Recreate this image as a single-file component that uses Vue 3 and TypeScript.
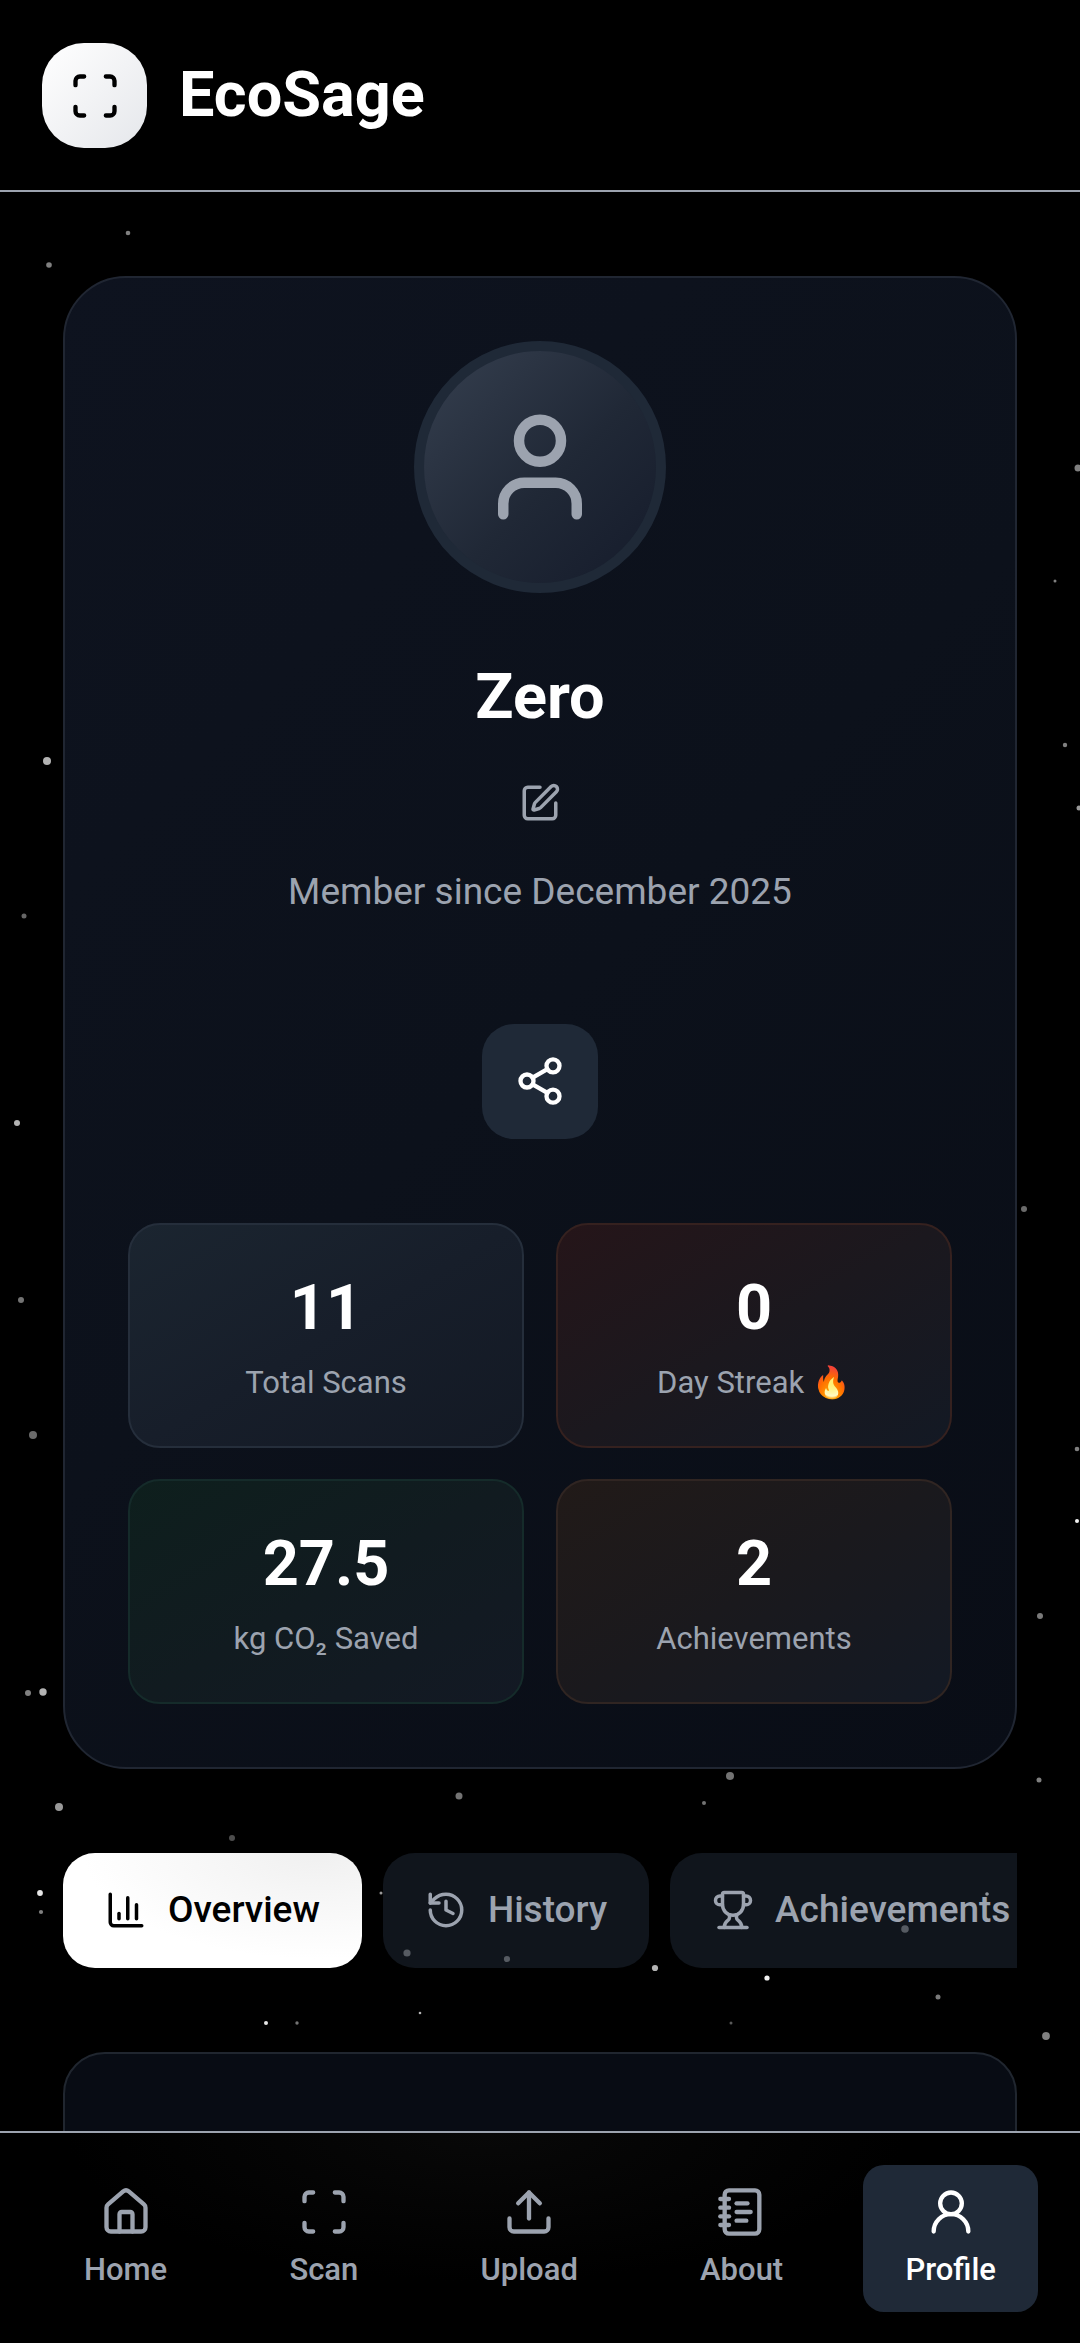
<script setup lang="ts">
interface Star {
  x: number
  y: number
  r: number
  o: number
}

interface Item {
  id: string
  label: string
  paths: string[]
}

const scanPaths = [
  'M3 7V5a2 2 0 0 1 2-2h2',
  'M17 3h2a2 2 0 0 1 2 2v2',
  'M21 17v2a2 2 0 0 1-2 2h-2',
  'M7 21H5a2 2 0 0 1-2-2v-2',
]

const stats = [
  { id: 'scans', value: '11', label: 'Total Scans' },
  { id: 'streak', value: '0', label: 'Day Streak 🔥' },
  { id: 'carbon', value: '27.5', label: 'kg CO₂ Saved' },
  { id: 'awards', value: '2', label: 'Achievements' },
]

const activeTab = 'overview'
const tabs: Item[] = [
  {
    id: 'overview',
    label: 'Overview',
    paths: ['M3 3v16a2 2 0 0 0 2 2h16', 'M18 17V9', 'M13 17V5', 'M8 17v-3'],
  },
  {
    id: 'history',
    label: 'History',
    paths: ['M3 12a9 9 0 1 0 9-9 9.75 9.75 0 0 0-6.74 2.74L3 8', 'M3 3v5h5', 'M12 7v5l4 2'],
  },
  {
    id: 'achievements',
    label: 'Achievements',
    paths: [
      'M6 9H4.5a2.5 2.5 0 0 1 0-5H6',
      'M18 9h1.5a2.5 2.5 0 0 0 0-5H18',
      'M4 22h16',
      'M10 14.66v1.626a2 2 0 0 1-.976 1.696A5 5 0 0 0 7 21.978',
      'M14 14.66v1.626a2 2 0 0 0 .976 1.696A5 5 0 0 1 17 21.978',
      'M6 9a6 6 0 0 0 12 0V3a1 1 0 0 0-1-1H7a1 1 0 0 0-1 1z',
    ],
  },
]

const activePage = 'profile'
const pages: Item[] = [
  {
    id: 'home',
    label: 'Home',
    paths: [
      'M15 21v-8a1 1 0 0 0-1-1h-4a1 1 0 0 0-1 1v8',
      'M3 10a2 2 0 0 1 .709-1.528l7-5.999a2 2 0 0 1 2.582 0l7 5.999A2 2 0 0 1 21 10v9a2 2 0 0 1-2 2H5a2 2 0 0 1-2-2z',
    ],
  },
  { id: 'scan', label: 'Scan', paths: scanPaths },
  {
    id: 'upload',
    label: 'Upload',
    paths: ['M12 3v12', 'm17 8-5-5-5 5', 'M21 15v4a2 2 0 0 1-2 2H5a2 2 0 0 1-2-2v-4'],
  },
  {
    id: 'about',
    label: 'About',
    paths: [
      'M2 6h4',
      'M2 10h4',
      'M2 14h4',
      'M2 18h4',
      'M6 2h12a2 2 0 0 1 2 2v16a2 2 0 0 1-2 2H6a2 2 0 0 1-2-2V4a2 2 0 0 1 2-2z',
      'M9.5 8h5',
      'M9.5 12H16',
      'M9.5 16H14',
    ],
  },
  {
    id: 'profile',
    label: 'Profile',
    paths: ['M12 3a5 5 0 1 0 0 10a5 5 0 1 0 0-10z', 'M20 21a8 8 0 0 0-16 0'],
  },
]

const stars: Star[] = [
  { x: 128, y: 233, r: 2.3, o: 0.5 },
  { x: 49, y: 265, r: 2.8, o: 0.5 },
  { x: 1078, y: 468, r: 3.5, o: 0.5 },
  { x: 1055, y: 581, r: 1.5, o: 0.5 },
  { x: 1065, y: 745, r: 2.2, o: 0.5 },
  { x: 47, y: 761, r: 4, o: 0.7 },
  { x: 1079, y: 808, r: 2.5, o: 0.6 },
  { x: 24, y: 916, r: 2.5, o: 0.4 },
  { x: 17, y: 1123, r: 3, o: 0.7 },
  { x: 1024, y: 1209, r: 3, o: 0.42 },
  { x: 21, y: 1300, r: 3, o: 0.45 },
  { x: 33, y: 1435, r: 4, o: 0.42 },
  { x: 1077, y: 1449, r: 2.3, o: 0.5 },
  { x: 1077, y: 1521, r: 2, o: 0.95 },
  { x: 1040, y: 1616, r: 3, o: 0.48 },
  { x: 43, y: 1692, r: 3.7, o: 0.7 },
  { x: 28, y: 1693, r: 3, o: 0.5 },
  { x: 730, y: 1776, r: 4, o: 0.45 },
  { x: 1039, y: 1780, r: 2.5, o: 0.5 },
  { x: 459, y: 1796, r: 3.5, o: 0.45 },
  { x: 704, y: 1803, r: 2, o: 0.45 },
  { x: 59, y: 1807, r: 4, o: 0.6 },
  { x: 232, y: 1838, r: 3, o: 0.3 },
  { x: 381, y: 1893, r: 1.5, o: 0.6 },
  { x: 40, y: 1893, r: 2.9, o: 0.9 },
  { x: 987, y: 1894, r: 1.8, o: 1 },
  { x: 41, y: 1912, r: 2.1, o: 0.5 },
  { x: 905, y: 1929, r: 3.8, o: 0.55 },
  { x: 407, y: 1953, r: 3.6, o: 0.55 },
  { x: 507, y: 1959, r: 3.1, o: 0.55 },
  { x: 655, y: 1968, r: 3.1, o: 0.7 },
  { x: 767, y: 1978, r: 2.6, o: 0.95 },
  { x: 938, y: 1997, r: 2.5, o: 0.48 },
  { x: 420, y: 2013, r: 1.3, o: 0.7 },
  { x: 731, y: 2023, r: 1.5, o: 0.35 },
  { x: 266, y: 2023, r: 2, o: 0.9 },
  { x: 297, y: 2023, r: 1.7, o: 0.45 },
  { x: 1046, y: 2036, r: 3.9, o: 0.5 },
]
</script>

<template>
  <div class="app">
    <svg class="stars" aria-hidden="true">
      <circle v-for="(s, i) in stars" :key="i" :cx="s.x" :cy="s.y" :r="s.r" :opacity="s.o" fill="#fff" />
    </svg>

    <header class="topbar">
      <div class="logo">
        <svg class="icon icon-md" viewBox="0 0 24 24" aria-hidden="true">
          <path v-for="d in scanPaths" :key="d" :d="d" />
        </svg>
      </div>
      <h1 class="brand">EcoSage</h1>
    </header>

    <main class="content">
      <section class="profile">
        <div class="avatar">
          <svg class="icon icon-lg" viewBox="0 0 24 24" aria-hidden="true">
            <path d="M19 21v-2a4 4 0 0 0-4-4H9a4 4 0 0 0-4 4v2" />
            <circle cx="12" cy="7" r="4" />
          </svg>
        </div>
        <h2 class="name">Zero</h2>
        <button class="edit" type="button" aria-label="Edit name">
          <svg class="icon icon-sm" viewBox="0 0 24 24" aria-hidden="true">
            <path d="M12 3H5a2 2 0 0 0-2 2v14a2 2 0 0 0 2 2h14a2 2 0 0 0 2-2v-7" />
            <path d="M18.375 2.625a1 1 0 0 1 3 3l-9.013 9.014a2 2 0 0 1-.853.505l-2.873.84a.5.5 0 0 1-.62-.62l.84-2.873a2 2 0 0 1 .506-.852z" />
          </svg>
        </button>
        <p class="since">Member since December 2025</p>
        <button class="share" type="button" aria-label="Share profile">
          <svg class="icon icon-md" viewBox="0 0 24 24" aria-hidden="true">
            <circle cx="18" cy="5" r="3" />
            <circle cx="6" cy="12" r="3" />
            <circle cx="18" cy="19" r="3" />
            <path d="M8.59 13.51l6.83 3.98" />
            <path d="M15.41 6.51l-6.82 3.98" />
          </svg>
        </button>

        <div class="stats">
          <div v-for="s in stats" :key="s.id" class="stat" :class="s.id">
            <span class="value">{{ s.value }}</span>
            <span class="label">{{ s.label }}</span>
          </div>
        </div>
      </section>

      <div class="tabs" role="tablist">
        <button
          v-for="t in tabs"
          :key="t.id"
          class="tab"
          :class="{ active: t.id === activeTab }"
          type="button"
          role="tab"
          :aria-selected="t.id === activeTab"
        >
          <svg class="icon icon-sm" viewBox="0 0 24 24" aria-hidden="true">
            <path v-for="d in t.paths" :key="d" :d="d" />
          </svg>
          {{ t.label }}
        </button>
      </div>

      <section class="panel"></section>
    </main>

    <nav class="bottombar">
      <a v-for="p in pages" :key="p.id" class="page" :class="{ active: p.id === activePage }" :href="'#' + p.id">
        <svg class="icon icon-md" viewBox="0 0 24 24" aria-hidden="true">
          <path v-for="d in p.paths" :key="d" :d="d" />
        </svg>
        <span>{{ p.label }}</span>
      </a>
    </nav>
  </div>
</template>

<style>
body {
  margin: 0;
  background: #000;
}
</style>

<style scoped>
.app {
  position: relative;
  display: flex;
  flex-direction: column;
  height: 100vh;
  overflow: hidden;
  background: #000;
  color: #fff;
  font-family: Roboto, "Noto Sans", sans-serif;
}

.app *,
.app {
  box-sizing: border-box;
}

button {
  margin: 0;
  border: 0;
  font: inherit;
  cursor: pointer;
}

.stars {
  position: absolute;
  inset: 0;
  width: 100%;
  height: 100%;
  pointer-events: none;
}

.icon {
  display: block;
  flex: none;
  fill: none;
  stroke: currentColor;
  stroke-width: 2;
  stroke-linecap: round;
  stroke-linejoin: round;
}

.icon-sm {
  width: 42px;
  height: 42px;
}

.icon-md {
  width: 52px;
  height: 52px;
}

.icon-lg {
  width: 126px;
  height: 126px;
}

.topbar {
  position: relative;
  display: flex;
  flex: none;
  align-items: center;
  gap: 32px;
  padding: 43px 42px 42px;
  border-bottom: 2px solid #9ca3af;
}

.logo {
  display: flex;
  align-items: center;
  justify-content: center;
  width: 105px;
  height: 105px;
  border-radius: 42px;
  background: linear-gradient(135deg, #fff, #e5e7eb);
  color: #000;
}

.brand {
  margin: 0;
  padding-bottom: 2px;
  font-size: 63px;
  font-weight: 700;
  line-height: 82px;
}

.content {
  position: relative;
  display: flex;
  flex: 1;
  flex-direction: column;
  gap: 84px;
  min-height: 0;
  padding: 84px 63px;
  overflow-y: auto;
  scrollbar-width: none;
}

.profile {
  display: flex;
  flex: none;
  flex-direction: column;
  align-items: center;
  padding: 63px;
  border: 2px solid #202632;
  border-radius: 63px;
  background: linear-gradient(135deg, #0e131f, #0c111b 50%, #090d16);
}

.avatar {
  display: flex;
  align-items: center;
  justify-content: center;
  width: 252px;
  height: 252px;
  border: 10px solid #1f2937;
  border-radius: 50%;
  background: linear-gradient(135deg, #374151, #202836 55%, #141a2a);
  background-origin: border-box;
  color: #9ca3af;
}

.name {
  margin: 63px 0 0;
  font-size: 63px;
  font-weight: 700;
  line-height: 82px;
}

.edit {
  margin-top: 23px;
  padding: 21px;
  background: transparent;
  color: #9ca3af;
}

.since {
  margin: 21px 0 0;
  color: #9ca3af;
  font-size: 37px;
  line-height: 52px;
}

.share {
  margin-top: 106px;
  padding: 31px 32px 32px;
  border-radius: 32px;
  background: #1f2937;
  color: #fff;
}

.stats {
  display: grid;
  grid-template-columns: 1fr 1fr;
  gap: 31px 32px;
  width: 100%;
  margin-top: 84px;
}

.stat {
  display: flex;
  flex-direction: column;
  align-items: center;
  gap: 13px;
  padding: 42px;
  border: 2px solid;
  border-radius: 32px;
}

.scans {
  border-color: #252e3b;
  background: linear-gradient(150deg, #1b2530, #171e2a 50%, #131924);
}

.streak {
  border-color: #35211f;
  background: linear-gradient(150deg, #251519, #1b181e 50%, #131924);
}

.carbon {
  border-color: #152b2a;
  background: linear-gradient(150deg, #0e1f1d, #111b20 50%, #131924);
}

.awards {
  border-color: #302522;
  background: linear-gradient(150deg, #211a18, #1a191d 50%, #131924);
}

.value {
  font-size: 63px;
  font-weight: 700;
  line-height: 82px;
}

.label {
  color: #9ca3af;
  font-size: 31px;
  line-height: 42px;
  white-space: nowrap;
}

.tabs {
  display: flex;
  flex: none;
  gap: 21px;
  overflow-x: auto;
  scrollbar-width: none;
}

.tab {
  display: flex;
  flex: none;
  align-items: center;
  gap: 21px;
  padding: 31px 42px 32px;
  border-radius: 32px;
  background: rgba(31, 41, 55, 0.5);
  color: #9ca3af;
  font-size: 37px;
  font-weight: 500;
  line-height: 52px;
}

.tab.active {
  background: radial-gradient(ellipse at 85% 0, #f0f0f0, #fff 65%);
  color: #000;
}

.panel {
  flex: none;
  min-height: 420px;
  border: 2px solid #20262f;
  border-radius: 42px;
  background: #080c14;
}

.bottombar {
  position: relative;
  display: flex;
  flex: none;
  align-items: flex-start;
  justify-content: space-between;
  padding: 32px 42px 31px;
  border-top: 2px solid #9ca3af;
  background: radial-gradient(ellipse at 45% 0, #080808, #000 50%);
}

.page {
  display: flex;
  flex-direction: column;
  align-items: center;
  gap: 11px;
  padding: 21px 42px;
  border-radius: 21px;
  color: #9ca3af;
  font-size: 31px;
  font-weight: 500;
  line-height: 42px;
  text-decoration: none;
}

.page.active {
  background: #1f2937;
  color: #fff;
}
</style>
